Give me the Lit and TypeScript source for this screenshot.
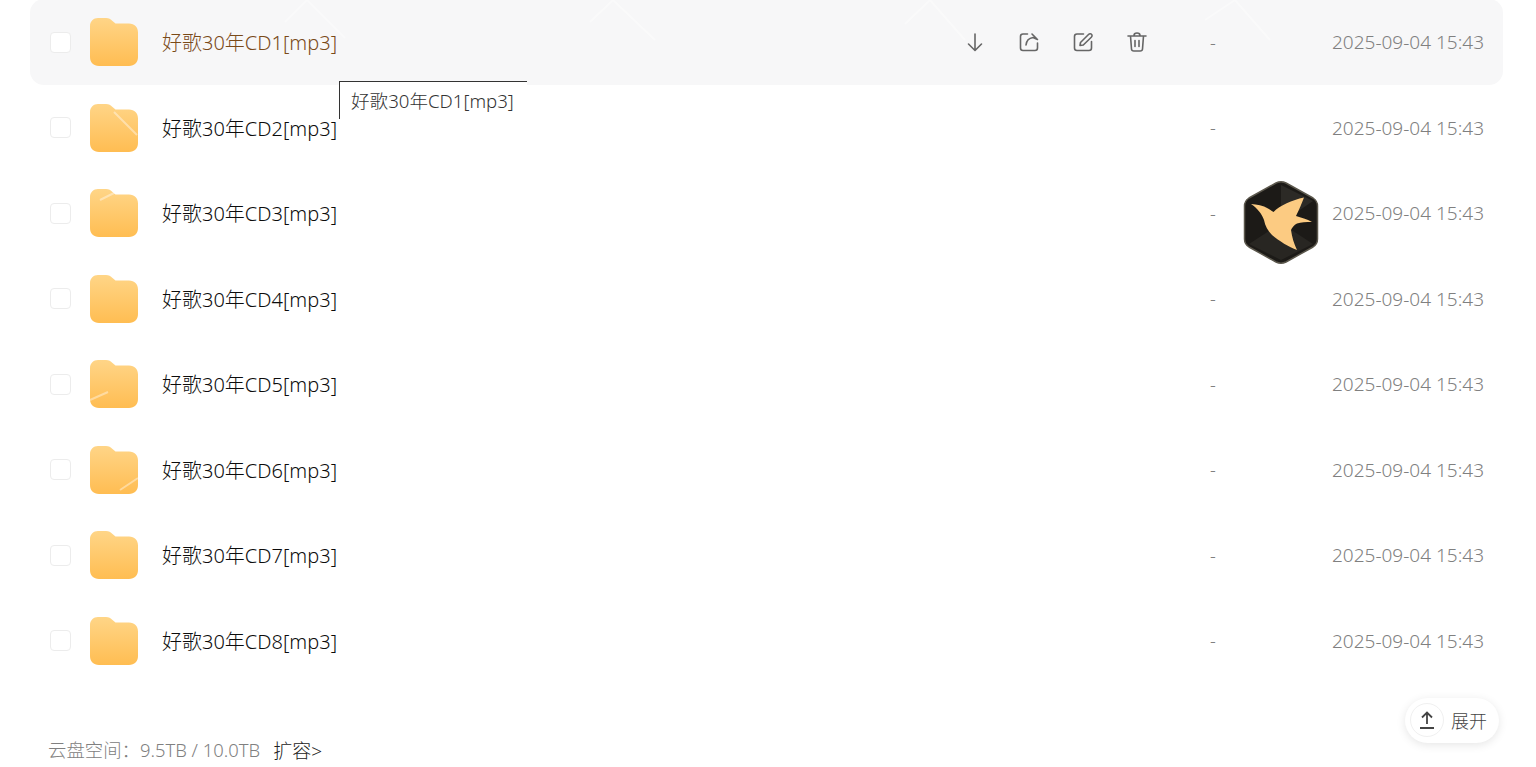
import { LitElement, html, css, svg } from "lit";
import { customElement } from "lit/decorators.js";

const folder = html`<svg class="folder" viewBox="0 0 48 48" width="48" height="48">
  <defs><linearGradient id="fg" x1="0" y1="0" x2="0" y2="1"><stop offset="0" stop-color="#ffd587"/><stop offset="1" stop-color="#ffbd52"/></linearGradient></defs>
  <path d="M0 8C0 3.500 3.500 0 8 0H16C19 0 20.500 1 22.500 3L25.500 5.500H39C44.500 5.500 48 9 48 14.500V39C48 44.500 44.500 48 39 48H9C3.500 48 0 44.500 0 39Z" fill="url(#fg)"/>
</svg>`;

const ic = (body: unknown) => html`<svg viewBox="0 0 24 24" width="24" height="24" fill="none" stroke="#666" stroke-width="1.6" stroke-linecap="round" stroke-linejoin="round">${body}</svg>`;

const icons = [
  ic(svg`<path d="M12 4V20M5.500 14L12 20.500L18.500 14"/>`),
  ic(svg`<path d="M10.500 4H6C4.500 4 3.500 5 3.500 6.500V18C3.500 19.500 4.500 20.500 6 20.500H18C19.500 20.500 20.500 19.500 20.500 18V13"/><path d="M9 15C9.500 10.500 12.500 8 16 7.500L20.500 9.500L15 4"/>`),
  ic(svg`<path d="M12.500 4H6C4.500 4 3.500 5 3.500 6.500V18C3.500 19.500 4.500 20.500 6 20.500H18C19.500 20.500 20.500 19.500 20.500 18V11.500"/><path d="M9 15.500L9.500 12.500L17.500 4.500C18.500 3.500 19.800 3.500 20.500 4.300C21.300 5.100 21.200 6.300 20.300 7.200L12.300 15Z"/>`),
  ic(svg`<path d="M3 6H21M9 5.500C9 3.800 10 3 12 3C14 3 15 3.800 15 5.500M5.500 6L6.500 19C6.600 20.300 7.500 21 8.800 21H15.200C16.500 21 17.400 20.300 17.500 19L18.500 6M10 10.500V16.500M14 10.500V16.500"/>`),
];

const rows = [1, 2, 3, 4, 5, 6, 7, 8];

@customElement("app-root")
export class AppRoot extends LitElement {
  static styles = css`
    :host { display: block; position: relative; width: 1536px; height: 767px; overflow: hidden; background: #fff; font-family: "Noto Sans", "Noto Sans CJK SC", sans-serif; font-weight: 300; }
    .list { display: flex; flex-direction: column; margin: -0.75px 33px 0 30px; }
    .row { height: 85.5px; display: flex; align-items: center; padding: 0 19px 0 20px; box-sizing: border-box; }
    .row.hover { background: #f7f7f8; border-radius: 14px; }
    .check { width: 21px; height: 21px; border: 1px solid #ececec; border-radius: 4px; background: #fff; box-sizing: border-box; margin-right: 19px; }
    .folder { flex: none; margin-right: 24px; }
    .name { flex: none; font-size: 20px; color: #0c0c0c; width: 801px; white-space: nowrap; padding-bottom: 1px; }
    .hover .name { color: #7a4a18; }
    .actions { flex: none; display: flex; gap: 30px; width: 186px; margin-right: 61px; }
    .dash { color: #808080; font-size: 18px; padding-bottom: 1px; }
    .date { margin-left: auto; color: #808080; font-size: 19px; white-space: nowrap; }
    .tooltip { position: absolute; left: 339px; top: 81px; width: 188px; height: 38px; box-sizing: border-box; padding: 4px 0 0 11px; background: #fff; border-top: 1px solid #333; border-left: 1px solid #333; font-size: 18.6px; color: #333; white-space: nowrap; }
    .logo { position: absolute; left: 1242px; top: 180px; }
    .foot { position: absolute; left: 48px; top: 736px; font-size: 18.4px; color: #808080; white-space: nowrap; display: flex; gap: 13px; }
    .foot b { font-weight: 300; color: #222; font-size: 19px; }
    .expand { position: absolute; left: 1405px; top: 698px; width: 94px; height: 45px; border-radius: 23px; background: #fff; box-shadow: 0 2px 10px rgba(0,0,0,.1); display: flex; align-items: center; gap: 7px; padding: 0 0 2px 5px; box-sizing: border-box; font-size: 18px; color: #444; }
    .circle { width: 34px; height: 34px; border-radius: 50%; border: 1px solid #f0f0f0; box-sizing: border-box; display: flex; align-items: center; justify-content: center; }
    .marks { position: absolute; left: 0; top: 0; pointer-events: none; }
  `;

  render() {
    return html`
      <div class="list">
        ${rows.map((n, i) => html`
          <div class="row ${i === 0 ? "hover" : ""}">
            <span class="check"></span>
            ${folder}
            <span class="name">好歌30年CD${n}[mp3]</span>
            <div class="actions">${i === 0 ? icons : ""}</div>
            <span class="dash">-</span>
            <span class="date">2025-09-04 15:43</span>
          </div>`)}
      </div>
      <svg class="marks" width="1536" height="767" fill="none" stroke="#fff" stroke-width="2" opacity=".4">
        <path d="M285 22L307 0L345 38M590 22L613 0L655 40M905 24L930 0L965 40M1205 20L1235 0L1270 40"/>
        <path d="M114 112L137 135M90 400L108 392M120 490L138 478M100 200L120 190"/>
      </svg>
      <div class="tooltip">好歌30年CD1[mp3]</div>
      <svg class="logo" width="78" height="86" viewBox="0 0 78 86">
        <path d="M34 3C37 1.500 41 1.500 44 3L71 18C74 20 75.500 22.500 75.500 26V59C75.500 62.500 74 65 71 67L44 82C41 83.500 37 83.500 34 82L7 67C4 65 2.500 62.500 2.500 59V26C2.500 22.500 4 20 7 18Z" fill="#1c1a17" stroke="#5b574c" stroke-width="1.500"/>
        <path d="M39 5L71 21L39 43Z" fill="#2c2a26"/>
        <path d="M39 43L7 64L39 80L71 64Z" fill="#282622"/>
        <path d="M9 24C15 24.500 21 25.500 26 28.500C28 29.500 30 31 31.500 32C38 25.500 50 20 62 17.500C60 23 57 30 54 36C59 37.500 65 39 70 42C64 42 59 42 55 43.500C52 45 50 48 49 50C50 57 52 64 55 70C47 67 37 61 30 55C26 51 23 46 22 40C20 34 15 28 9 24Z" fill="#fccb82"/>
      </svg>
      <div class="foot"><span>云盘空间：9.5TB / 10.0TB</span><b>扩容&gt;</b></div>
      <div class="expand">
        <span class="circle"><svg width="18" height="20" viewBox="0 0 18 20" fill="none" stroke="#444" stroke-width="1.800"><path d="M9 14V3M4 7.500L9 2.500L14 7.500M2 18H16"/></svg></span>
        展开
      </div>
    `;
  }
}
